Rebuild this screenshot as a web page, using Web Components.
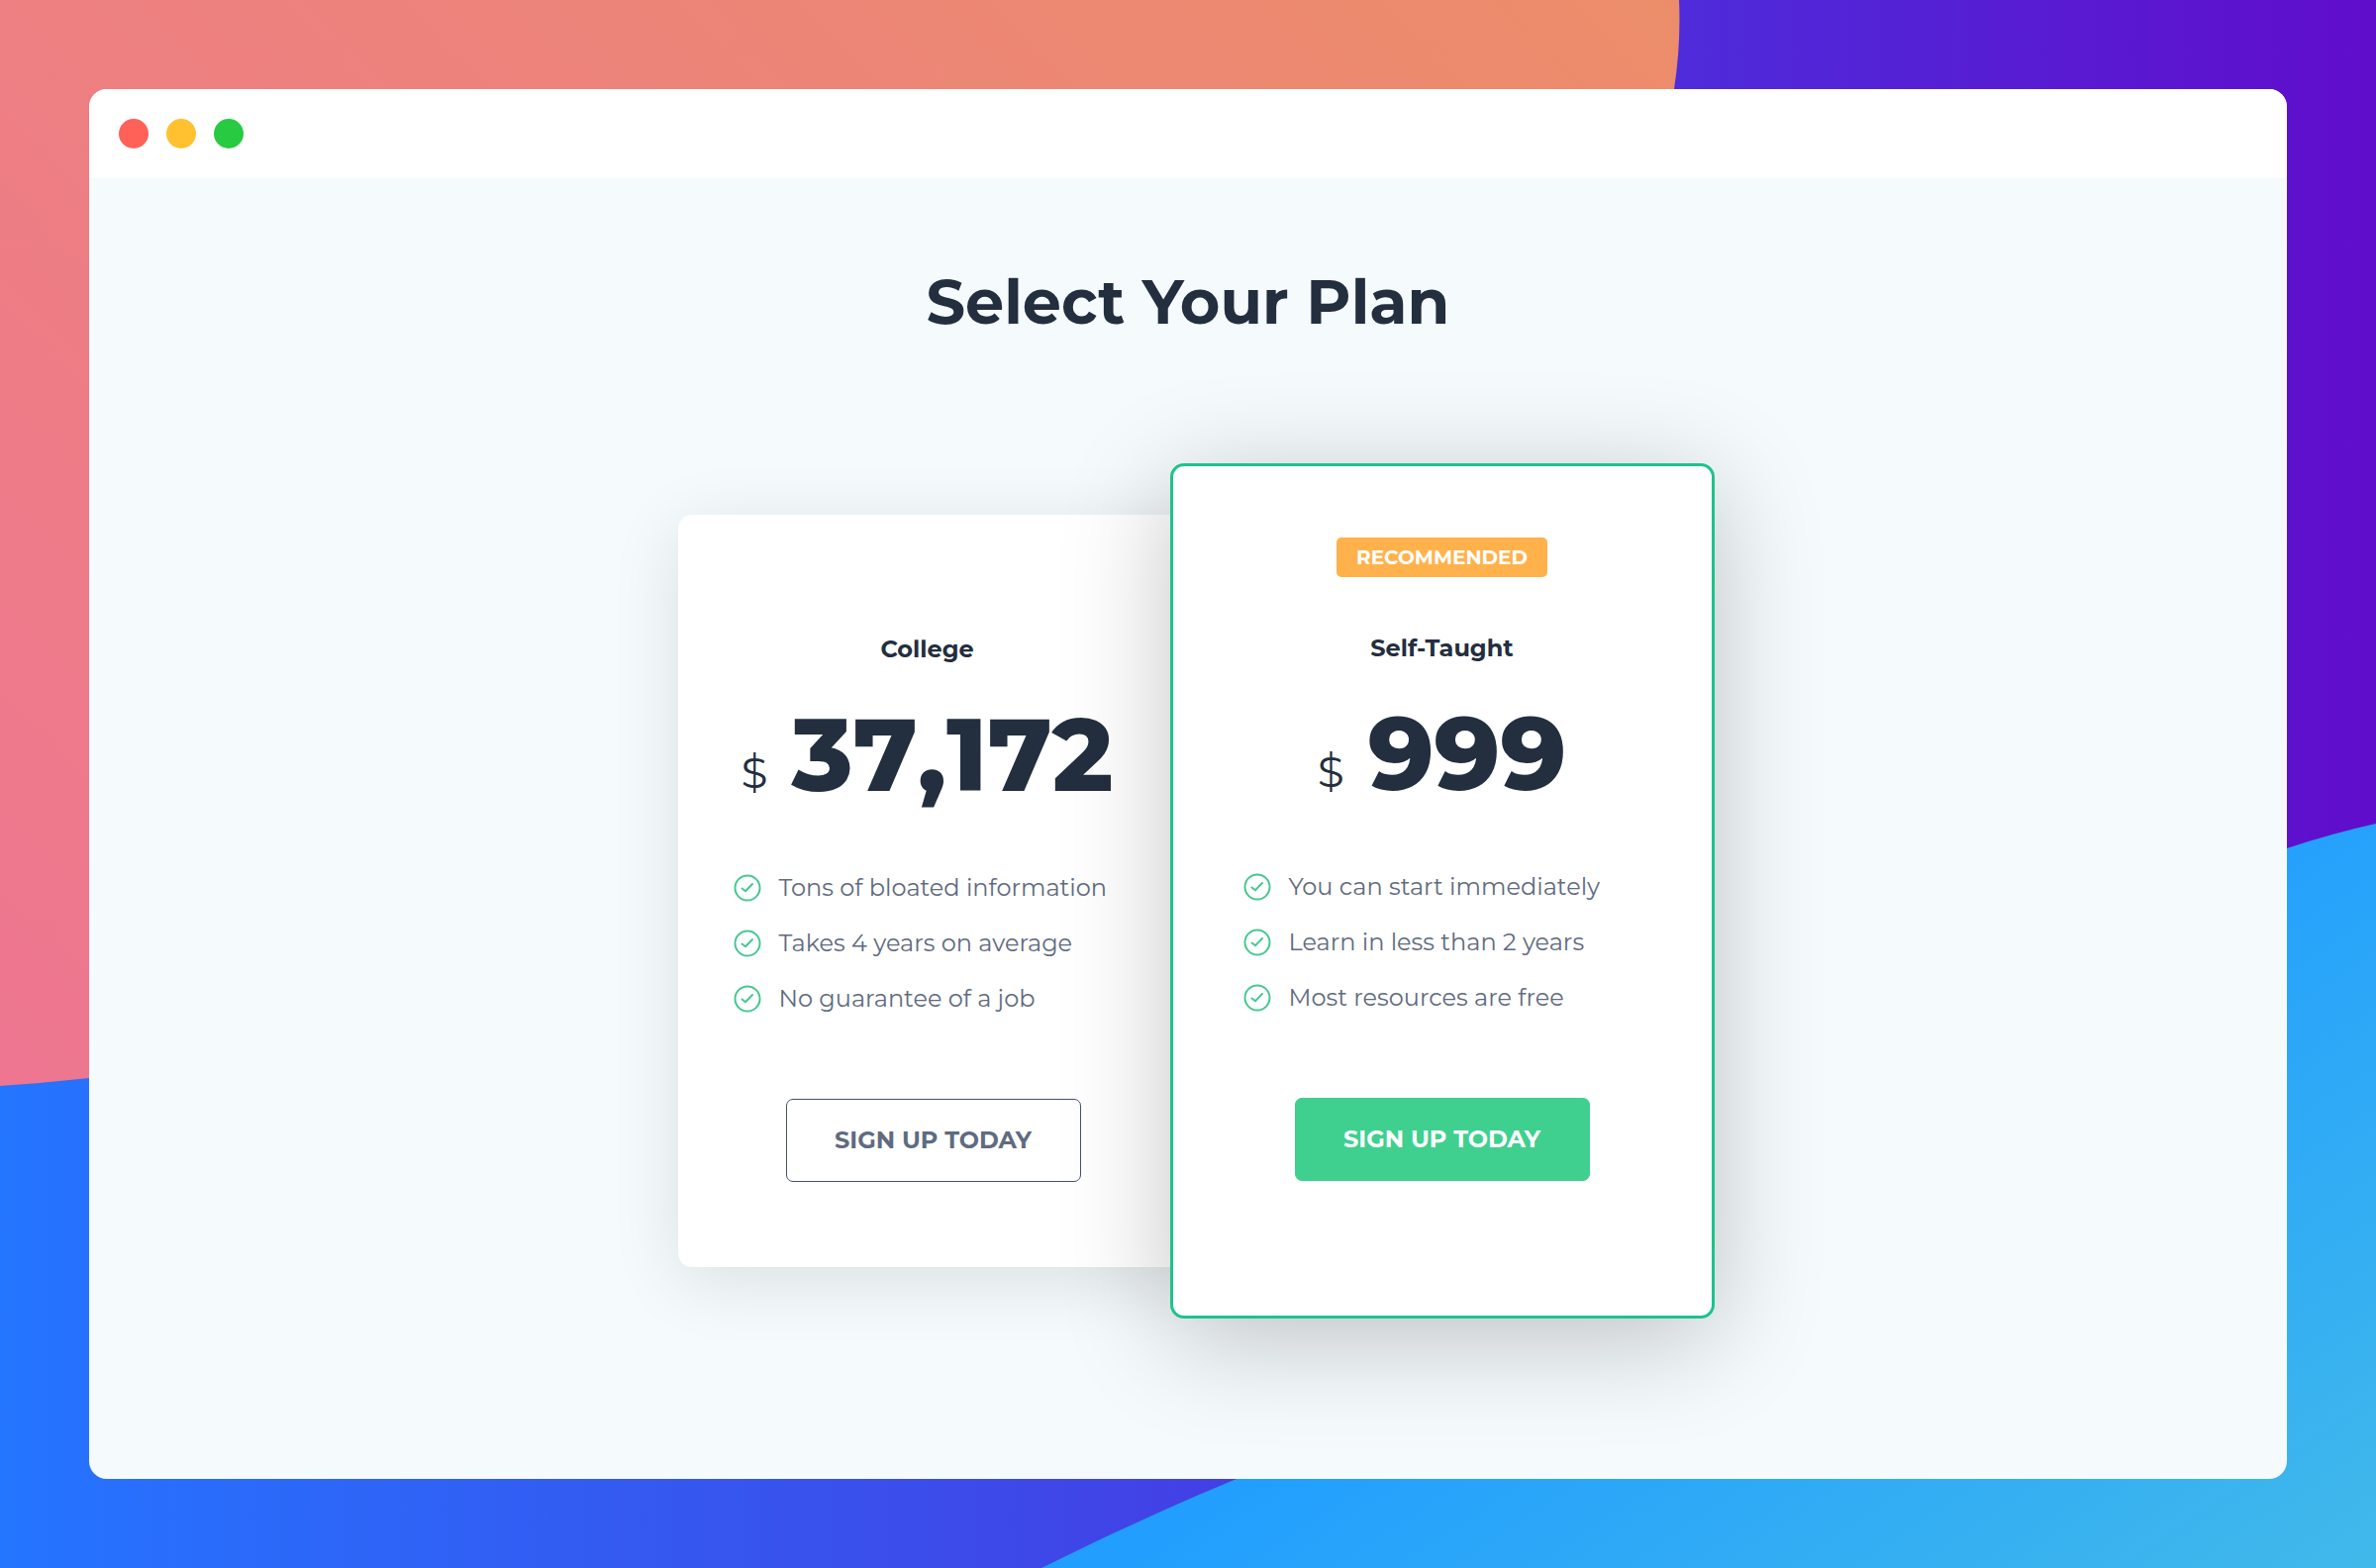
<!DOCTYPE html>
<html lang="en">
<head>
<meta charset="utf-8">
<title>Select Your Plan</title>
<style>
  body { margin: 0; font-family: Montserrat, Inter, "Open Sans", sans-serif; color: #232e3f; }
</style>
</head>
<body>
<gradient-backdrop>
  <browser-window>
    <plan-picker heading="Select Your Plan">
      <plan-card name="College" price="37,172">
        <plan-feature>Tons of bloated information</plan-feature>
        <plan-feature>Takes 4 years on average</plan-feature>
        <plan-feature>No guarantee of a job</plan-feature>
      </plan-card>
      <plan-card name="Self-Taught" price="999" badge="RECOMMENDED" featured>
        <plan-feature>You can start immediately</plan-feature>
        <plan-feature>Learn in less than 2 years</plan-feature>
        <plan-feature>Most resources are free</plan-feature>
      </plan-card>
    </plan-picker>
  </browser-window>
</gradient-backdrop>

<script>
const define = (name, render) => customElements.define(name, class extends HTMLElement {
  connectedCallback() {
    if (!this.shadowRoot) this.attachShadow({ mode: 'open' }).innerHTML = render(this);
  }
});

define('gradient-backdrop', () => `
  <style>
    :host { display: flex; box-sizing: border-box; min-height: 100vh; padding: 90px; position: relative; isolation: isolate; overflow: hidden; }
    svg { position: absolute; inset: 0; width: 100%; height: 100%; z-index: -1; }
    ::slotted(*) { flex: 1; }
  </style>
  <svg viewBox="0 0 2400 1584" preserveAspectRatio="none" aria-hidden="true">
    <defs>
      <linearGradient id="base"><stop stop-color="#2475ff"/><stop offset="1" stop-color="#600dcb"/></linearGradient>
      <linearGradient id="warm" gradientUnits="userSpaceOnUse" x1="0" y1="1100" x2="1395" y2="-295"><stop stop-color="#ee7691"/><stop offset="1" stop-color="#ec8d6a"/></linearGradient>
      <linearGradient id="cool" gradientUnits="userSpaceOnUse" x1="1150" y1="1540" x2="1555" y2="2147"><stop stop-color="#219eff"/><stop offset="1" stop-color="#41b9ea"/></linearGradient>
    </defs>
    <rect width="2400" height="1584" fill="url(#base)"/>
    <path fill="url(#warm)" d="M0 0H1696Q1698 45 1691 90C1600 750 800 1010 90 1089Q45 1094 0 1097Z"/>
    <path fill="url(#cool)" d="M2400 832Q2355 842 2310 857C1950 960 1700 1270 1249 1494Q1150 1535 1052 1584H2400Z"/>
  </svg>
  <slot></slot>`);

define('browser-window', () => `
  <style>
    :host { display: flex; flex-direction: column; min-width: 0; border-radius: 18px; overflow: hidden; background: #f5fafd; }
    header { display: flex; align-items: center; gap: 18px; height: 90px; padding: 0 30px; background: #fff; }
    i { width: 30px; height: 30px; border-radius: 50%; background: #ff6158; }
    i:nth-child(2) { background: #ffc130; }
    i:nth-child(3) { background: #28ca41; }
  </style>
  <header><i></i><i></i><i></i></header>
  <slot></slot>`);

define('plan-picker', el => `
  <style>
    :host { display: block; padding: 85px 0 0; }
    h1 { margin: 0; font-size: 62px; line-height: 80px; font-weight: 700; text-align: center; }
    .plans { display: flex; justify-content: center; align-items: center; margin-top: 123px; padding-left: 16px; }
  </style>
  <h1>${el.getAttribute('heading')}</h1>
  <div class="plans"><slot></slot></div>`);

define('plan-card', el => {
  const badge = el.getAttribute('badge');
  return `
  <style>
    :host { display: flex; flex-direction: column; align-items: center; box-sizing: border-box; width: 516px; padding: 120px 56px 86px; border-radius: 14px; background: #fff; box-shadow: 0 14px 70px rgba(0,0,0,.11); }
    :host([featured]) { position: relative; width: 550px; margin-left: -19px; padding: 72px 71px 136px; border: 3px solid #1cc48b; box-shadow: 0 20px 110px rgba(0,0,0,.23); }
    .badge { height: 40px; margin-bottom: 56px; padding: 0 20px; border-radius: 5px; background: #ffb24b; color: #fff; font-size: 20px; line-height: 40px; font-weight: 700; }
    .summary { padding-right: 12px; text-align: center; }
    :host([featured]) .summary { padding-right: 0; }
    h2 { margin: 0; font-size: 24px; line-height: 32px; font-weight: 700; }
    p { display: flex; justify-content: center; align-items: flex-end; gap: 24px; margin: 38px 0 0; font-size: 103px; line-height: 104px; font-weight: 800; font-kerning: none; white-space: nowrap; }
    small { font-size: 44px; line-height: 68px; font-weight: 400; }
    .features { align-self: stretch; display: grid; gap: 28px; margin: 69px 0 87px; }
    button { width: 298px; height: 84px; padding: 0; border: 1px solid #465269; border-radius: 7px; background: transparent; color: #5f6b80; font: 700 24px/32px Montserrat, Inter, "Open Sans", sans-serif; cursor: pointer; }
    :host([featured]) button { border-color: #3fd08f; background: #3fd08f; color: #fff; }
  </style>
  ${badge ? `<span class="badge">${badge}</span>` : ''}
  <div class="summary">
    <h2>${el.getAttribute('name')}</h2>
    <p><small>$</small><span>${el.getAttribute('price')}</span></p>
  </div>
  <div class="features" role="list"><slot></slot></div>
  <button type="button">SIGN UP TODAY</button>`;
});

define('plan-feature', el => {
  el.setAttribute('role', 'listitem');
  return `
  <style>
    :host { display: flex; align-items: center; gap: 18px; color: #5f6b80; font-size: 24px; line-height: 28px; font-weight: 400; white-space: nowrap; }
    svg { flex: none; width: 28px; height: 28px; fill: none; stroke: #46c88f; stroke-width: 2; stroke-linecap: round; stroke-linejoin: round; }
  </style>
  <svg viewBox="0 0 28 28" aria-hidden="true"><circle cx="14" cy="14" r="12.5"/><path d="M8.5 14.5L12 17.2L19 10"/></svg>
  <span><slot></slot></span>`;
});
</script>
</body>
</html>
